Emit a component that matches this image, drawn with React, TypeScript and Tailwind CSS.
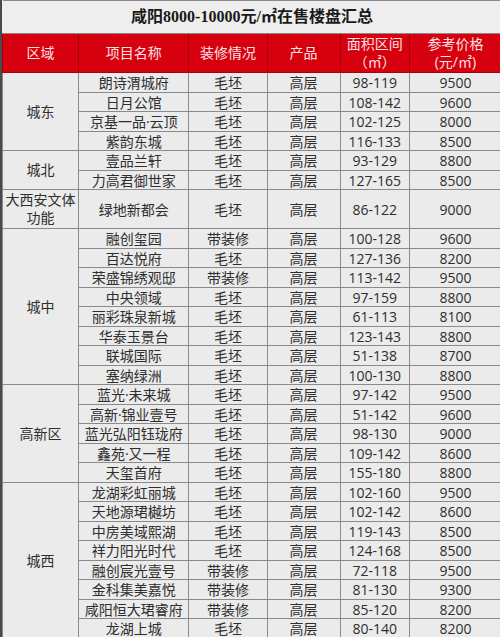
import React from "react";

type Row = { name: string; deco: string; area: string; price: string };

const groups: { region: string[]; tall?: boolean; rows: Row[] }[] = [
  {
    region: ["城东"],
    rows: [
      { name: "朗诗渭城府", deco: "毛坯", area: "98-119", price: "9500" },
      { name: "日月公馆", deco: "毛坯", area: "108-142", price: "9600" },
      { name: "京基一品·云顶", deco: "毛坯", area: "102-125", price: "8000" },
      { name: "紫韵东城", deco: "毛坯", area: "116-133", price: "8500" },
    ],
  },
  {
    region: ["城北"],
    rows: [
      { name: "壹品兰轩", deco: "毛坯", area: "93-129", price: "8800" },
      { name: "力高君御世家", deco: "毛坯", area: "127-165", price: "8500" },
    ],
  },
  {
    region: ["大西安文体", "功能"],
    tall: true,
    rows: [{ name: "绿地新都会", deco: "毛坯", area: "86-122", price: "9000" }],
  },
  {
    region: ["城中"],
    rows: [
      { name: "融创玺园", deco: "带装修", area: "100-128", price: "9600" },
      { name: "百达悦府", deco: "毛坯", area: "127-136", price: "8200" },
      { name: "荣盛锦绣观邸", deco: "带装修", area: "113-142", price: "9500" },
      { name: "中央领域", deco: "毛坯", area: "97-159", price: "8800" },
      { name: "丽彩珠泉新城", deco: "毛坯", area: "61-113", price: "8100" },
      { name: "华泰玉景台", deco: "毛坯", area: "123-143", price: "8800" },
      { name: "联城国际", deco: "毛坯", area: "51-138", price: "8700" },
      { name: "塞纳绿洲", deco: "毛坯", area: "100-130", price: "8800" },
    ],
  },
  {
    region: ["高新区"],
    rows: [
      { name: "蓝光·未来城", deco: "毛坯", area: "97-142", price: "9500" },
      { name: "高新·锦业壹号", deco: "毛坯", area: "51-142", price: "9600" },
      { name: "蓝光弘阳钰珑府", deco: "毛坯", area: "98-130", price: "9000" },
      { name: "鑫苑·又一程", deco: "毛坯", area: "109-142", price: "8600" },
      { name: "天玺首府", deco: "毛坯", area: "155-180", price: "8800" },
    ],
  },
  {
    region: ["城西"],
    rows: [
      { name: "龙湖彩虹丽城", deco: "毛坯", area: "102-160", price: "9500" },
      { name: "天地源珺樾坊", deco: "毛坯", area: "102-142", price: "8600" },
      { name: "中房美域熙湖", deco: "毛坯", area: "119-143", price: "8500" },
      { name: "祥力阳光时代", deco: "毛坯", area: "124-168", price: "8500" },
      { name: "融创宸光壹号", deco: "带装修", area: "72-118", price: "9500" },
      { name: "金科集美嘉悦", deco: "带装修", area: "81-130", price: "9300" },
      { name: "咸阳恒大珺睿府", deco: "带装修", area: "85-120", price: "8200" },
      { name: "龙湖上城", deco: "毛坯", area: "80-140", price: "8200" },
    ],
  },
];

const cell = "border border-[#8a8a8a] p-0 text-center align-middle whitespace-nowrap";
const head = "border border-[#a5000c] p-0 text-center align-middle text-[#fde3e3] text-[14px] leading-[18px]";

export default function App() {
  // rows alternate 20/19px so the grid keeps the 19.5px pitch of the source image
  let n = 0;
  return (
    <div className="w-[500px] h-[637px] overflow-hidden bg-[#ebebeb] border-l-2 border-[#4a4a4a]">
      <table
        className="w-[500px] table-fixed border-collapse text-[14px] leading-[17px] text-[#2e2e2e]"
        style={{ fontFamily: '"Open Sans", "Noto Sans CJK SC", sans-serif' }}
      >
        <colgroup>
          <col className="w-[76px]" />
          <col className="w-[110px]" />
          <col className="w-[78px]" />
          <col className="w-[73px]" />
          <col className="w-[69px]" />
          <col className="w-[92px]" />
        </colgroup>
        <tbody>
          <tr className="h-[33px] bg-[#eeeeee]">
            <td
              colSpan={6}
              className="border-t border-b border-[#8a8a8a] p-0 text-center align-middle text-[16px] leading-[20px] font-semibold text-[#1a1a1a]"
              style={{ fontFamily: '"Liberation Serif", "Noto Sans CJK SC", serif' }}
            >
              咸阳8000-10000元/㎡在售楼盘汇总
            </td>
          </tr>
          <tr className="h-[39px] bg-[#d6000f]">
            <td className={head}>区域</td>
            <td className={head}>项目名称</td>
            <td className={head}>装修情况</td>
            <td className={head}>产品</td>
            <td className={head}>
              面积区间
              <br />
              （㎡）
            </td>
            <td className={head}>
              参考价格
              <br />
              (元/㎡)
            </td>
          </tr>
          {groups.map((g) =>
            g.rows.map((r, i) => {
              let h = "h-[39px]";
              if (!g.tall) h = n % 2 === 0 ? "h-[20px]" : "h-[19px]";
              n += g.tall ? 2 : 1;
              return (
                <tr key={r.name} className={h}>
                  {i === 0 && (
                    <td rowSpan={g.rows.length} className={cell + " whitespace-normal leading-[18px]"}>
                      {g.region.map((t) => (
                        <div key={t}>{t}</div>
                      ))}
                    </td>
                  )}
                  <td className={cell}>{r.name}</td>
                  <td className={cell}>{r.deco}</td>
                  <td className={cell}>高层</td>
                  <td className={cell}>{r.area}</td>
                  <td className={cell}>{r.price}</td>
                </tr>
              );
            })
          )}
        </tbody>
      </table>
    </div>
  );
}
